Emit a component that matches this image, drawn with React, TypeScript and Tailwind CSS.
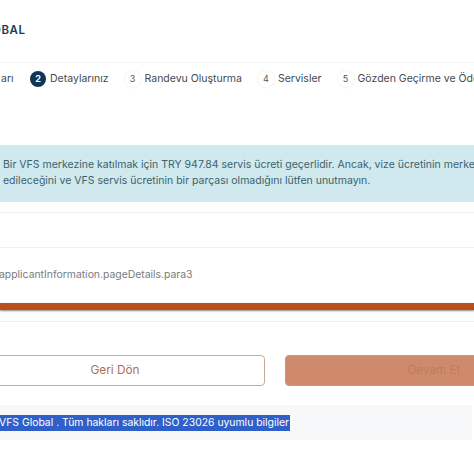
import React from "react";

function Step({ n, label, active }: { n: number; label: string; active?: boolean }) {
  return (
    <div className="flex items-center gap-[4px] shrink-0 whitespace-nowrap">
      <span
        className={
          active
            ? "w-[16px] h-[16px] rounded-full bg-[#0f3557] text-white text-[9px] font-bold flex items-center justify-center"
            : "w-[16px] h-[16px] rounded-full bg-white shadow-[0_0_3px_#e8e8e8] text-[#555555] text-[9px] flex items-center justify-center"
        }
      >
        {n}
      </span>
      <span className="text-[10.5px] text-[#444a50]">{label}</span>
    </div>
  );
}

export default function App() {
  return (
    <div className="w-[474px] h-[474px] overflow-hidden bg-white flex flex-col [font-family:Inter,'Noto_Sans',sans-serif]">
      {/* header */}
      <div className="h-[62px] pt-[23px] shrink-0">
        <div className="ml-[-24px] text-[11.5px] leading-[14px] font-semibold tracking-[0.6px] text-[#1d3a58]">GLOBAL</div>
      </div>

      {/* stepper */}
      <div className="h-[32px] shrink-0 border-t border-[#f5f5f5] flex items-center whitespace-nowrap">
        <span className="text-[10.5px] text-[#444a50] w-[30px] pl-[1px] shrink-0">arı</span>
        <div className="flex items-center gap-[16px]">
          <Step n={2} label="Detaylarınız" active />
          <Step n={3} label="Randevu Oluşturma" />
          <Step n={4} label="Servisler" />
          <Step n={5} label="Gözden Geçirme ve Ödeme" />
        </div>
      </div>

      {/* info */}
      <div className="mt-[51px] h-[57px] shrink-0 bg-[#cfe9ef] pl-[3px] pt-[12px] text-[10.5px] leading-[16px] text-[#3d626b] whitespace-nowrap overflow-hidden">
        <p>Bir VFS merkezine katılmak için TRY 947.84 servis ücreti geçerlidir. Ancak, vize ücretinin merkezde tahsil</p>
        <p>edileceğini ve VFS servis ücretinin bir parçası olmadığını lütfen unutmayın.</p>
      </div>

      {/* empty rows */}
      <div className="mt-[10px] h-[35px] shrink-0 border-t border-[#f1f1f1]" />
      <div className="h-[56px] shrink-0 border-t border-[#f1f1f1] flex items-center">
        <span className="ml-[-1px] mt-[-2px] text-[10.4px] text-[#777b80] whitespace-nowrap">applicantInformation.pageDetails.para3</span>
      </div>

      {/* progress */}
      <div className="h-[7px] shrink-0 bg-[#b84f1d] shadow-[0_1px_2px_#888888]" />
      <div className="mt-[11px] h-[34px] shrink-0 border-t border-[#f1f1f1]" />

      {/* buttons */}
      <div className="h-[31px] shrink-0 flex gap-[20px] ml-[-35px] w-[618px]">
        <button className="w-[300px] rounded-[4px] border border-[#c9a79b] bg-white text-[11.8px] text-[#a5705c]">Geri Dön</button>
        <button className="w-[298px] rounded-[4px] bg-[#cf8a6c] text-[11.8px] text-[#bd7d62] border border-[#c89580]">Devam Et</button>
      </div>

      {/* footer */}
      <div className="mt-[19px] h-[35px] shrink-0 w-[472px] bg-[#f7f8fa] flex items-center whitespace-nowrap overflow-hidden">
        <span className="bg-[#2f5fc9] text-white text-[10.4px] leading-[16px] ml-[-1px] pr-[1px] shrink-0">VFS Global . Tüm hakları saklıdır. ISO 23026 uyumlu bilgiler</span>
      </div>
    </div>
  );
}
